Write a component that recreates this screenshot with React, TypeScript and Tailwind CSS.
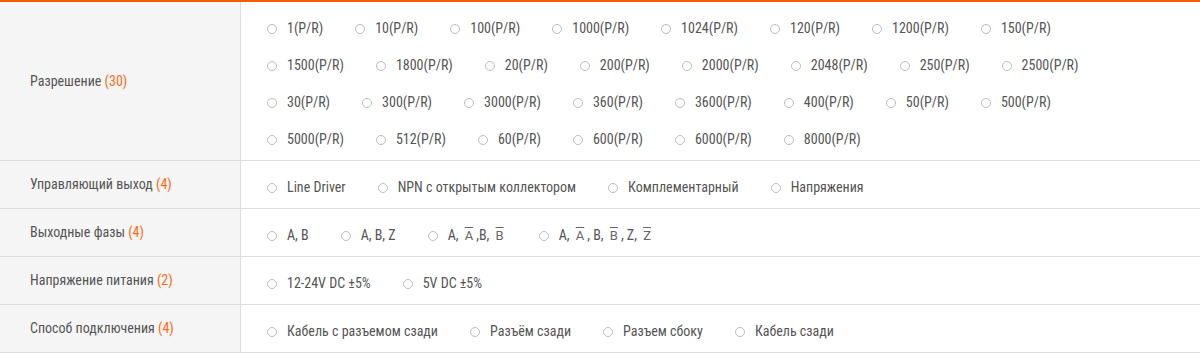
import type { ReactNode } from 'react';

type Filter = {
  label: string;
  count: number;
  options: ReactNode[];
  perLine?: number;
};

const Bar = ({ children }: { children: string }) => (
  <span className="overline font-['Roboto'] text-[13px] text-[#666] mx-[3px]">{children}</span>
);

const resolutions = [
  '1', '10', '100', '1000', '1024', '120', '1200', '150',
  '1500', '1800', '20', '200', '2000', '2048', '250', '2500',
  '30', '300', '3000', '360', '3600', '400', '50', '500',
  '5000', '512', '60', '600', '6000', '8000',
].map((r) => `${r}(P/R)`);

const filters: Filter[] = [
  { label: 'Разрешение', count: 30, options: resolutions, perLine: 8 },
  {
    label: 'Управляющий выход',
    count: 4,
    options: ['Line Driver', 'NPN с открытым коллектором', 'Комплементарный', 'Напряжения'],
  },
  {
    label: 'Выходные фазы',
    count: 4,
    options: [
      'A, B',
      'A, B, Z',
      <>
        A, <Bar>A</Bar>,B, <Bar>B</Bar>
      </>,
      <>
        A, <Bar>A</Bar>, B, <Bar>B</Bar>, Z, <Bar>Z</Bar>
      </>,
    ],
  },
  { label: 'Напряжение питания', count: 2, options: ['12-24V DC ±5%', '5V DC ±5%'] },
  {
    label: 'Способ подключения',
    count: 4,
    options: ['Кабель с разъемом сзади', 'Разъём сзади', 'Разъем сбоку', 'Кабель сзади'],
  },
];

const chunk = <T,>(arr: T[], size: number) => {
  const out: T[][] = [];
  for (let i = 0; i < arr.length; i += size) out.push(arr.slice(i, i + size));
  return out;
};

const Option = ({ children }: { children: ReactNode }) => (
  <label className="flex items-center mr-[32px] cursor-pointer">
    <span className="w-[10px] h-[10px] rounded-full border border-[#bdbdbd] bg-white mr-[10px] shrink-0"></span>
    <span className="whitespace-nowrap">{children}</span>
  </label>
);

const FilterRow = ({ filter }: { filter: Filter }) => {
  const lines = chunk(filter.options, filter.perLine ?? filter.options.length);
  return (
    <div className="flex border-b border-[#dddddd]">
      <div className="w-[241px] shrink-0 bg-[#f5f5f5] border-r border-[#dddddd] pl-[30px] flex items-center">
        <span>
          {filter.label} <span className="text-[#ff6a13]">({filter.count})</span>
        </span>
      </div>
      <div className="flex-1 pl-[26px] pt-2 pb-[2px] flex flex-col">
        {lines.map((line, i) => (
          <div key={i} className="h-[37px] flex items-center">
            {line.map((opt, j) => (
              <Option key={j}>{opt}</Option>
            ))}
          </div>
        ))}
      </div>
    </div>
  );
};

export default function App() {
  return (
    <div className="w-[1200px] bg-white border-t-2 border-[#ff5a00] font-['Roboto_Condensed',Roboto,sans-serif] text-[14px] text-[#555]">
      {filters.map((f) => (
        <FilterRow key={f.label} filter={f} />
      ))}
    </div>
  );
}
